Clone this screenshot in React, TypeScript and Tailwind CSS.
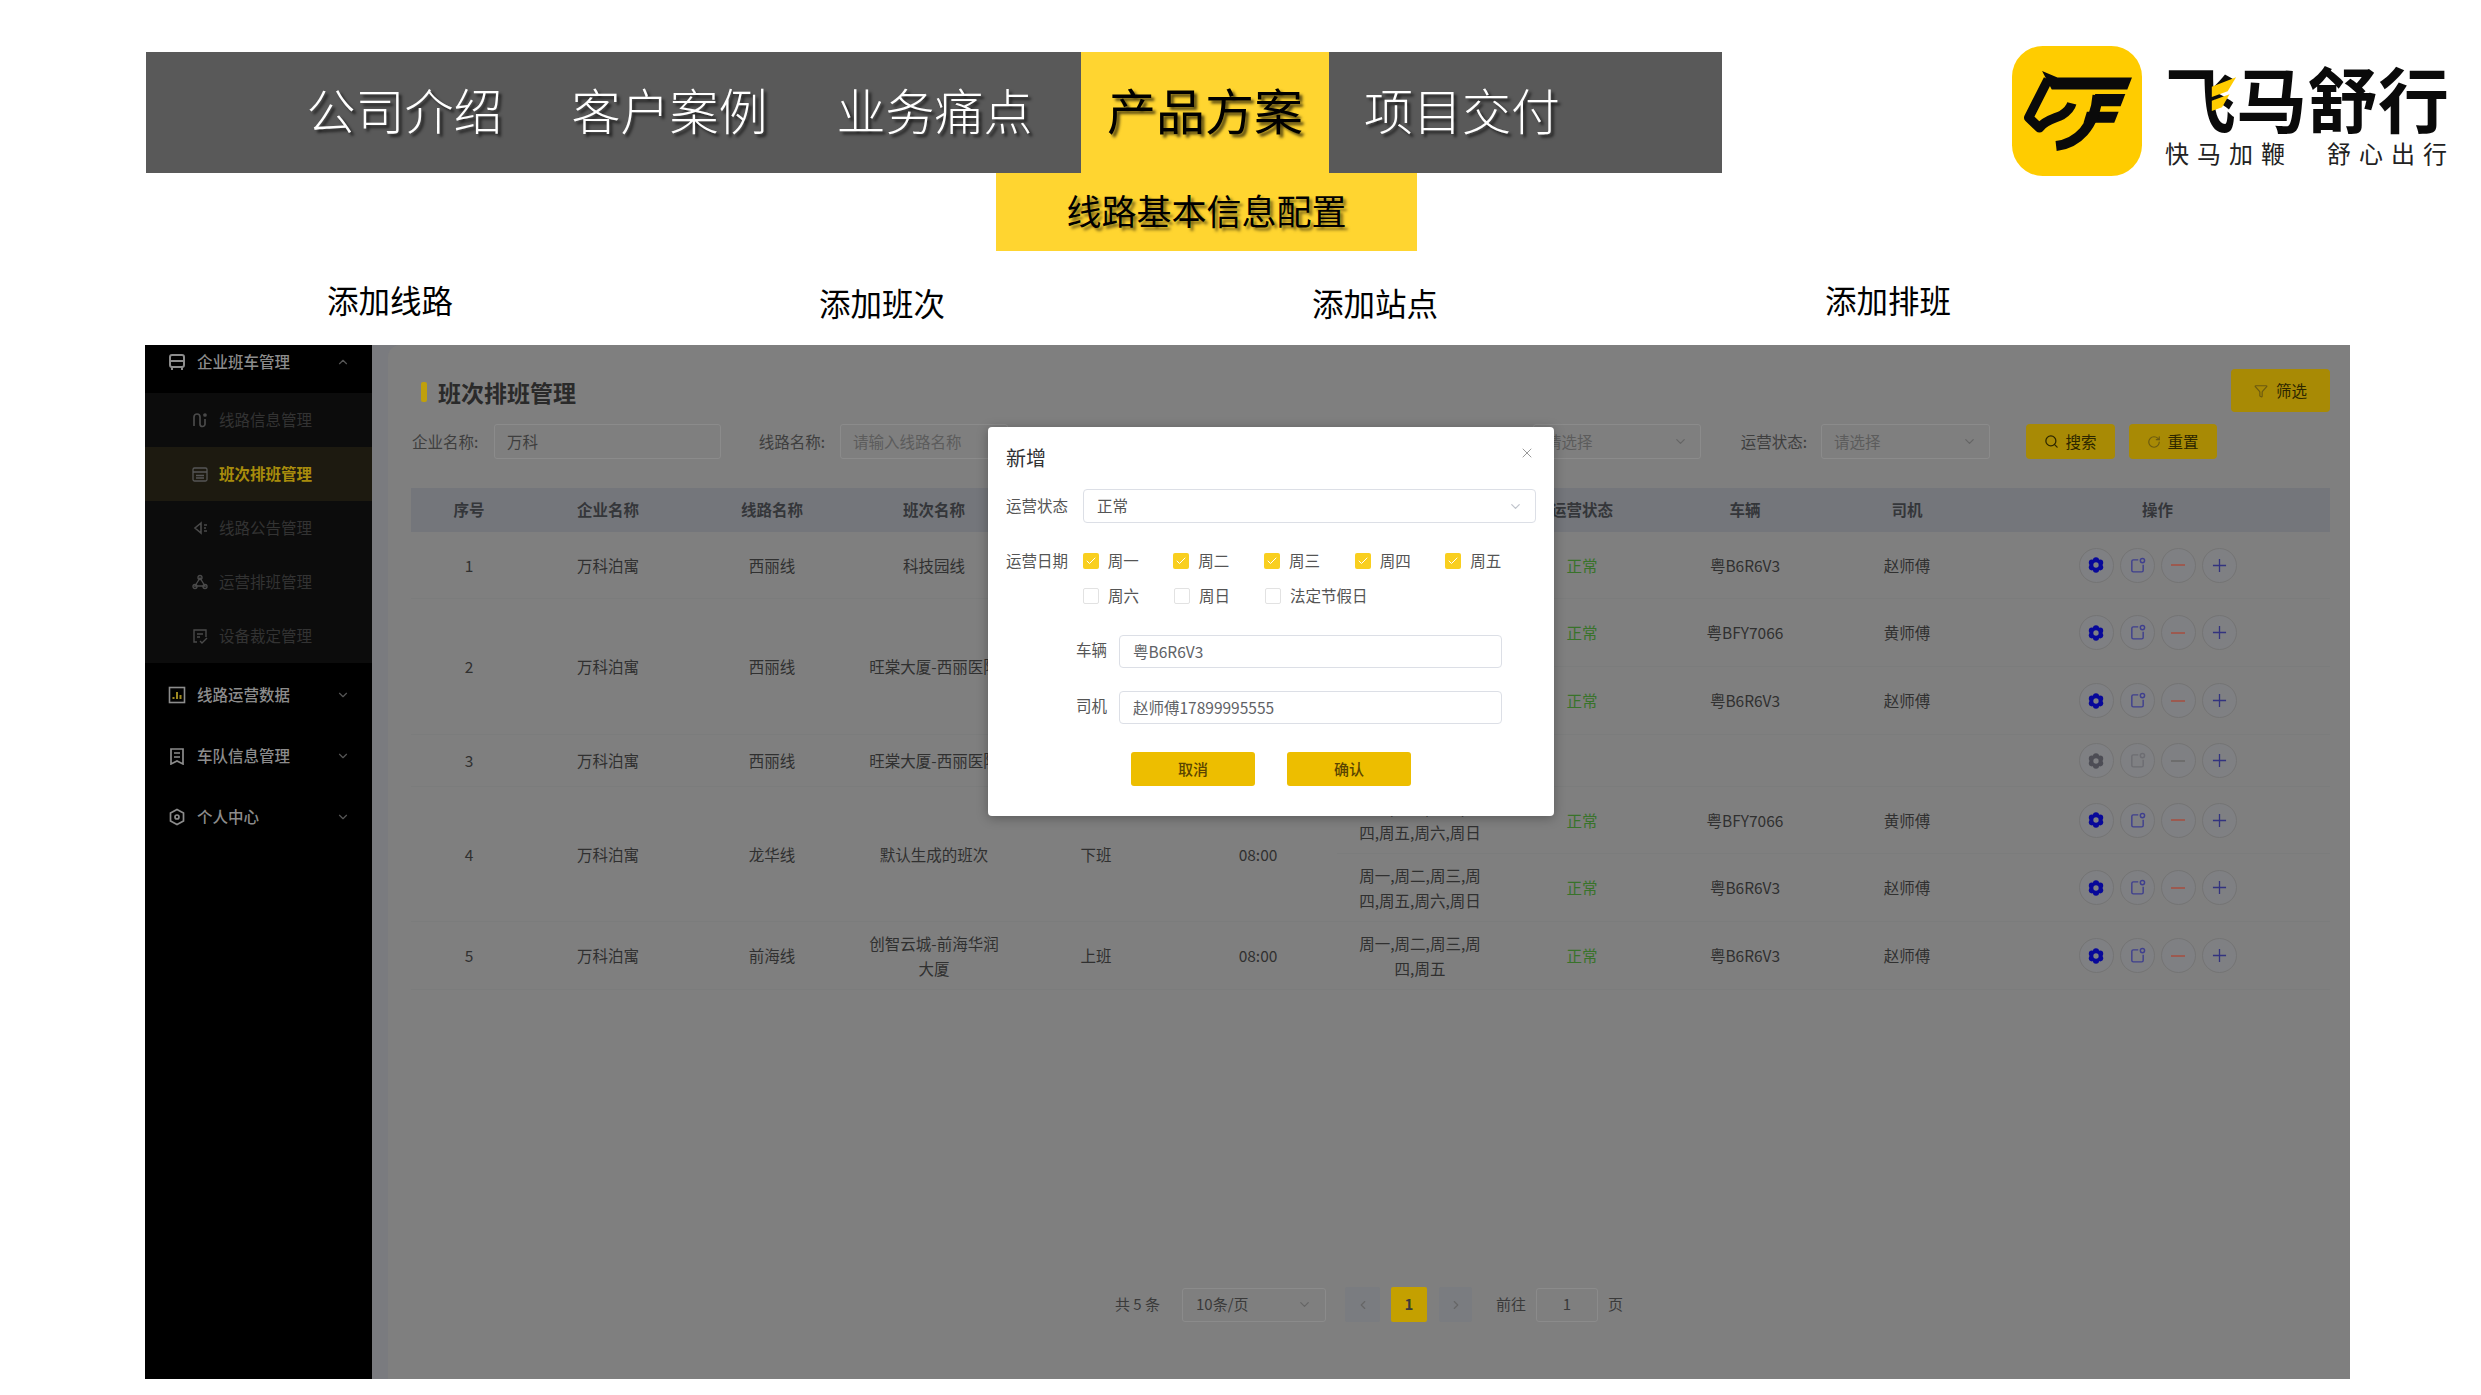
import React from "react";
import { ChevronDown, ChevronLeft, ChevronRight, ChevronUp, Filter, RotateCw, Search, X, Check } from "lucide-react";

type Sub = {
  days: string[];
  status: string;
  car: string;
  driver: string;
  active?: boolean;
};

type Group = {
  seq: number;
  line: string;
  shift: string[];
  type: string;
  time: string;
  subs: Sub[];
};

const allDays = ["周一,周二,周三,周", "四,周五,周六,周日"];
const workDays = ["周一,周二,周三,周", "四,周五"];

const groups: Group[] = [
  {
    seq: 1,
    line: "西丽线",
    shift: ["科技园线"],
    type: "上班",
    time: "08:00",
    subs: [{ days: workDays, status: "正常", car: "粤B6R6V3", driver: "赵师傅", active: true }],
  },
  {
    seq: 2,
    line: "西丽线",
    shift: ["旺棠大厦-西丽医院"],
    type: "上班",
    time: "08:00",
    subs: [
      { days: workDays, status: "正常", car: "粤BFY7066", driver: "黄师傅", active: true },
      { days: workDays, status: "正常", car: "粤B6R6V3", driver: "赵师傅", active: true },
    ],
  },
  {
    seq: 3,
    line: "西丽线",
    shift: ["旺棠大厦-西丽医院"],
    type: "下班",
    time: "18:00",
    subs: [{ days: [], status: "", car: "", driver: "" }],
  },
  {
    seq: 4,
    line: "龙华线",
    shift: ["默认生成的班次"],
    type: "下班",
    time: "08:00",
    subs: [
      { days: allDays, status: "正常", car: "粤BFY7066", driver: "黄师傅", active: true },
      { days: allDays, status: "正常", car: "粤B6R6V3", driver: "赵师傅", active: true },
    ],
  },
  {
    seq: 5,
    line: "前海线",
    shift: ["创智云城-前海华润", "大厦"],
    type: "上班",
    time: "08:00",
    subs: [{ days: workDays, status: "正常", car: "粤B6R6V3", driver: "赵师傅", active: true }],
  },
];

const headers = ["序号", "企业名称", "线路名称", "班次名称", "班次类型", "发车时间", "运营日期", "运营状态", "车辆", "司机", "操作"];

const Logo = () => (
  <svg viewBox="96 78 389 389" className="w-[130px] h-[130px] shrink-0">
    <rect x="96" y="78" width="389" height="389" rx="92" fill="#FFCC00" />
    <path d="M204 178 L146 292 L178 323 C195 300 225 295 245 285 C265 272 272 262 275 250" fill="none" stroke="#0a0a0a" strokeWidth="28" strokeLinejoin="round" />
    <polygon points="186,153 232,172 455,172 441,208 215,208" fill="#0a0a0a" />
    <polygon points="345,222 435,222 421,258 338,258" fill="#0a0a0a" />
    <polygon points="320,275 415,275 402,308 310,308" fill="#0a0a0a" />
    <path d="M352 225 C345 320 290 370 228 377" fill="none" stroke="#0a0a0a" strokeWidth="30" />
  </svg>
);

const GearIcon = ({ color }: { color: string }) => (
  <svg viewBox="0 0 24 24" className="w-[16px] h-[16px]">
    <g fill={color}>
      <circle cx="12" cy="5" r="4.6" />
      <circle cx="18.2" cy="8.5" r="4.6" />
      <circle cx="18.2" cy="15.5" r="4.6" />
      <circle cx="12" cy="19" r="4.6" />
      <circle cx="5.8" cy="15.5" r="4.6" />
      <circle cx="5.8" cy="8.5" r="4.6" />
    </g>
    <circle cx="12" cy="12" r="4" fill="#7f8083" />
  </svg>
);

const NoteIcon = ({ color }: { color: string }) => (
  <svg viewBox="0 0 24 24" className="w-[17px] h-[17px]" fill="none" stroke={color} strokeWidth="2">
    <path d="M13 4H6a2 2 0 0 0-2 2v13a2 2 0 0 0 2 2h12a2 2 0 0 0 2-2v-8" />
    <circle cx="19" cy="5" r="3" />
  </svg>
);

const Actions = ({ active }: { active?: boolean }) => (
  <div className="flex items-center justify-center gap-[6px]">
    <span className="w-[35px] h-[35px] rounded-full border border-[#747474] bg-[#7f8083] flex items-center justify-center">
      <GearIcon color={active ? "#08089a" : "#4d4d55"} />
    </span>
    <span className="w-[35px] h-[35px] rounded-full border border-[#747474] bg-[#7f8083] flex items-center justify-center">
      <NoteIcon color={active ? "#3f3f8e" : "#6d6d72"} />
    </span>
    <span className="w-[35px] h-[35px] rounded-full border border-[#747474] bg-[#7f8083] flex items-center justify-center">
      <span className={active ? "w-[14px] h-[2px] bg-[#9c5a50]" : "w-[14px] h-[2px] bg-[#6d6d6d]"} />
    </span>
    <span className="w-[35px] h-[35px] rounded-full border border-[#747474] bg-[#7f8083] flex items-center justify-center text-[#33337f]">
      <svg viewBox="0 0 16 16" className="w-[15px] h-[15px]" stroke="currentColor" strokeWidth="1.4">
        <path d="M8 1v14M1 8h14" />
      </svg>
    </span>
  </div>
);

const cellBase = "flex flex-col items-center justify-center border-b border-[#7b7c7c] text-center leading-[25px]";
const tableCols = "grid-cols-[116px_162px_166px_158px_166px_158px_166px_158px_168px_156px_1fr]";

const Table = () => (
  <div className="text-[15.5px] text-[#303030]">
    <div className={`grid ${tableCols} h-[44px] bg-[#74767b] items-center text-center font-bold text-[#34363a]`}>
      {headers.map((h) => (
        <span key={h}>{h}</span>
      ))}
    </div>
    <div className={`grid ${tableCols} grid-rows-[67px_68px_68px_52px_67px_68px_68px]`}>
      {groups.map((g) => {
        const span = g.subs.length === 2 ? "row-span-2" : "row-span-1";
        return (
          <React.Fragment key={g.seq}>
            <div className={`${cellBase} ${span}`}>{g.seq}</div>
            <div className={`${cellBase} ${span}`}>万科泊寓</div>
            <div className={`${cellBase} ${span}`}>{g.line}</div>
            <div className={`${cellBase} ${span}`}>
              {g.shift.map((s) => (
                <span key={s}>{s}</span>
              ))}
            </div>
            <div className={`${cellBase} ${span}`}>{g.type}</div>
            <div className={`${cellBase} ${span}`}>{g.time}</div>
            {g.subs.map((s, i) => (
              <React.Fragment key={i}>
                <div className={cellBase}>
                  {s.days.map((d) => (
                    <span key={d}>{d}</span>
                  ))}
                </div>
                <div className={`${cellBase} text-[#38732a]`}>{s.status}</div>
                <div className={cellBase}>{s.car}</div>
                <div className={cellBase}>{s.driver}</div>
                <div className={cellBase}>
                  <Actions active={s.active} />
                </div>
              </React.Fragment>
            ))}
          </React.Fragment>
        );
      })}
    </div>
  </div>
);

const SideTop = ({ icon, label, up, className }: { icon: React.ReactNode; label: string; up?: boolean; className: string }) => (
  <div className={`flex items-center pl-[23px] pr-[22px] text-[15.5px] font-medium text-[#8c8c8c] ${className}`}>
    <span className="w-[18px] h-[18px] mr-[11px] flex items-center justify-center">{icon}</span>
    <span className="flex-1">{label}</span>
    {up ? <ChevronUp size={14} className="text-[#555]" /> : <ChevronDown size={14} className="text-[#555]" />}
  </div>
);

const SideSub = ({ icon, label, active }: { icon: React.ReactNode; label: string; active?: boolean }) => (
  <div
    className={
      active
        ? "h-[54px] flex items-center pl-[47px] text-[15.5px] font-bold bg-[#1d1a10] text-[#a88c0c]"
        : "h-[54px] flex items-center pl-[47px] text-[15.5px] text-[#333]"
    }
  >
    <span className="w-[16px] h-[16px] mr-[11px] flex items-center justify-center">{icon}</span>
    {label}
  </div>
);

const Sidebar = () => (
  <aside className="w-[227px] shrink-0 bg-black h-full">
    <SideTop
      className="h-[48px] pb-[14px]"
      up
      label="企业班车管理"
      icon={
        <svg viewBox="0 0 18 18" className="w-[18px] h-[18px]" fill="none" stroke="#8c8c8c" strokeWidth="2">
          <rect x="2" y="2" width="14" height="12" rx="2" />
          <path d="M2 8h14M4 14v3M14 14v3" />
        </svg>
      }
    />
    <div className="bg-[#0c0c0c]">
      <SideSub
        label="线路信息管理"
        icon={
          <svg viewBox="0 0 16 16" className="w-[16px] h-[16px]" fill="none" stroke="#4a4a4a" strokeWidth="1.7">
            <path d="M2 14V5a3 3 0 0 1 6 0v7a2.5 2.5 0 0 0 5 0V7" />
            <circle cx="13" cy="3" r="1" fill="#4a4a4a" />
          </svg>
        }
      />
      <SideSub
        active
        label="班次排班管理"
        icon={
          <svg viewBox="0 0 16 16" className="w-[16px] h-[16px]" fill="none" stroke="#555" strokeWidth="1.3">
            <rect x="1" y="2" width="14" height="13" rx="1.5" />
            <path d="M1 6h14M4 9.5h8M4 12h8" />
          </svg>
        }
      />
      <SideSub
        label="线路公告管理"
        icon={
          <svg viewBox="0 0 16 16" className="w-[16px] h-[16px]" fill="none" stroke="#4a4a4a" strokeWidth="1.6">
            <path d="M9 3 3 8l6 5zM12 5h3M12 8h2M12 11h3" />
          </svg>
        }
      />
      <SideSub
        label="运营排班管理"
        icon={
          <svg viewBox="0 0 16 16" className="w-[16px] h-[16px]" fill="none" stroke="#4a4a4a" strokeWidth="1.4">
            <path d="M8 4 3 12h10z" />
            <circle cx="8" cy="3.5" r="2" />
            <circle cx="3" cy="12.5" r="2" />
            <circle cx="13" cy="12.5" r="2" />
          </svg>
        }
      />
      <SideSub
        label="设备裁定管理"
        icon={
          <svg viewBox="0 0 16 16" className="w-[16px] h-[16px]" fill="none" stroke="#4a4a4a" strokeWidth="1.4">
            <path d="M5 14H2V2h12v7M5 6h6M5 9h3M8 13l2 2 5-5" />
          </svg>
        }
      />
    </div>
    <SideTop
      className="h-[61px] mt-px"
      label="线路运营数据"
      icon={
        <svg viewBox="0 0 18 18" className="w-[18px] h-[18px]" fill="none" stroke="#8c8c8c" strokeWidth="1.6">
          <rect x="1.5" y="1.5" width="15" height="15" />
          <path d="M5.5 13v-2M9 13V6M12.5 13V9" strokeWidth="2" stroke="#a08a20" />
        </svg>
      }
    />
    <SideTop
      className="h-[61px]"
      label="车队信息管理"
      icon={
        <svg viewBox="0 0 18 18" className="w-[18px] h-[18px]" fill="none" stroke="#8c8c8c" strokeWidth="1.7">
          <path d="M3 2h12v15l-6-3-6 3zM6 6h6M6 10h6" />
        </svg>
      }
    />
    <SideTop
      className="h-[61px]"
      label="个人中心"
      icon={
        <svg viewBox="0 0 18 18" className="w-[18px] h-[18px]" fill="none" stroke="#8c8c8c" strokeWidth="1.7">
          <path d="M9 1.5 15.5 5v8L9 16.5 2.5 13V5z" />
          <circle cx="9" cy="9" r="2" />
        </svg>
      }
    />
  </aside>
);

const FieldBox = ({ text, width, chevron, dim }: { text: string; width: string; chevron?: boolean; dim?: boolean }) => (
  <div className={`h-[35px] ${width} rounded-[3px] border border-[#8b8b8b] flex items-center justify-between px-[12px] ${dim ? "text-[#5c5c5c]" : "text-[#3e3e3e]"}`}>
    <span>{text}</span>
    {chevron && <ChevronDown size={15} className="text-[#666]" />}
  </div>
);

const FilterRow = () => (
  <div className="flex items-center h-[35px] text-[15.5px] text-[#3e3e3e]">
    <span className="w-[83px] pl-px">企业名称:</span>
    <FieldBox text="万科" width="w-[227px]" />
    <span className="w-[119px] text-right pr-[15px]">线路名称:</span>
    <FieldBox text="请输入线路名称" width="w-[168px]" dim />
    <span className="w-[525px] text-right pr-[13px]">运营状况:</span>
    <FieldBox text="请选择" width="w-[168px]" chevron dim />
    <span className="w-[120px] text-right pr-[14px]">运营状态:</span>
    <FieldBox text="请选择" width="w-[169px]" chevron dim />
    <button className="ml-[36px] w-[89px] h-[35px] rounded-[4px] bg-[#a88a05] text-[#2c2600] flex items-center justify-center gap-[6px]">
      <Search size={15} />
      搜索
    </button>
    <button className="ml-[14px] w-[88px] h-[35px] rounded-[4px] bg-[#a88a05] text-[#2c2600] flex items-center justify-center gap-[6px]">
      <RotateCw size={14} className="text-[#6b5a10]" />
      重置
    </button>
  </div>
);

const Pagination = () => (
  <div className="flex items-center h-[35px] mt-[297px] ml-[704px] text-[15px] text-[#3a3a3a]">
    <span className="w-[48px] whitespace-nowrap">共 5 条</span>
    <div className="ml-[19px] w-[144px] h-[34px] rounded-[3px] border border-[#8b8b8b] flex items-center justify-between px-[13px]">
      10条/页
      <ChevronDown size={15} className="text-[#666]" />
    </div>
    <span className="ml-[19px] w-[35px] h-[35px] bg-[#7a7c80] rounded-[2px] flex items-center justify-center text-[#666]">
      <ChevronLeft size={14} />
    </span>
    <span className="ml-[11px] w-[36px] h-[35px] bg-[#c4a000] rounded-[2px] flex items-center justify-center font-bold">1</span>
    <span className="ml-[12px] w-[33px] h-[35px] bg-[#7a7c80] rounded-[2px] flex items-center justify-center text-[#666]">
      <ChevronRight size={14} />
    </span>
    <span className="ml-[24px]">前往</span>
    <span className="ml-[10px] w-[62px] h-[34px] rounded-[3px] border border-[#8b8b8b] flex items-center justify-center">1</span>
    <span className="ml-[10px]">页</span>
  </div>
);

const DayCheck = ({ label, checked, className }: { label: string; checked?: boolean; className: string }) => (
  <div className={`flex items-center ${className}`}>
    {checked ? (
      <span className="w-[16px] h-[16px] rounded-[2px] bg-[#f9cf1f] flex items-center justify-center text-white">
        <Check size={12} strokeWidth={2} />
      </span>
    ) : (
      <span className="w-[16px] h-[16px] rounded-[2px] border border-[#e2e2e2] bg-white" />
    )}
    <span className="ml-[9px]">{label}</span>
  </div>
);

const Modal = () => (
  <div className="absolute left-[843px] top-[82px] w-[566px] h-[389px] bg-white rounded-[4px] text-[15.5px] text-[#555] px-[18px] shadow-[0_2px_12px_rgba(0,0,0,0.3)]">
    <div className="flex items-center justify-between h-[62px] pr-0">
      <span className="text-[20px] text-[#303133]">新增</span>
      <X size={16} strokeWidth={1.5} className="text-[#9a9a9a] mb-[10px] mr-[1px]" />
    </div>
    <div className="flex items-center h-[34px]">
      <span className="w-[77px]">运营状态</span>
      <div className="flex-1 h-[34px] rounded-[4px] border border-[#dcdfe6] flex items-center justify-between pl-[13px] pr-[12px]">
        正常
        <ChevronDown size={15} className="text-[#c0c4cc]" />
      </div>
    </div>
    <div className="flex mt-[28px] h-[20px] items-center">
      <span className="w-[77px]">运营日期</span>
      <DayCheck className="w-[91px]" label="周一" checked />
      <DayCheck className="w-[91px]" label="周二" checked />
      <DayCheck className="w-[91px]" label="周三" checked />
      <DayCheck className="w-[91px]" label="周四" checked />
      <DayCheck className="w-[91px]" label="周五" checked />
    </div>
    <div className="flex mt-[15px] h-[20px] items-center pl-[77px]">
      <DayCheck className="w-[91px]" label="周六" />
      <DayCheck className="w-[91px]" label="周日" />
      <DayCheck className="w-[120px]" label="法定节假日" />
    </div>
    <div className="flex items-center h-[33px] mt-[29px]">
      <span className="w-[100px] pb-[4px] pl-[70px] whitespace-nowrap">车辆</span>
      <div className="ml-[13px] w-[383px] h-[33px] rounded-[4px] border border-[#dcdfe6] flex items-center pl-[13px] text-[#606266]">粤B6R6V3</div>
    </div>
    <div className="flex items-center h-[33px] mt-[23px]">
      <span className="w-[100px] pb-[4px] pl-[70px] whitespace-nowrap">司机</span>
      <div className="ml-[13px] w-[383px] h-[33px] rounded-[4px] border border-[#dcdfe6] flex items-center pl-[13px] text-[#606266]">赵师傅17899995555</div>
    </div>
    <div className="flex mt-[28px] ml-[125px] gap-[32px]">
      <button className="w-[124px] h-[34px] rounded-[3px] bg-[#edbe00] text-[#5b4500] text-[15px] font-medium">取消</button>
      <button className="w-[124px] h-[34px] rounded-[3px] bg-[#edbe00] text-[#5b4500] text-[15px] font-medium">确认</button>
    </div>
  </div>
);

const navShadow = "[text-shadow:3px_3px_3px_rgba(0,0,0,0.65)]";

export default function App() {
  return (
    <div className="w-[2481px] h-[1395px] bg-white overflow-hidden font-['Noto_Sans_CJK_SC','Liberation_Sans',sans-serif]">
      <div className="flex items-start h-[173px] pt-[52px] pl-[146px]">
        <nav className="flex w-[1576px] h-[121px] bg-[#595959] pl-[126px] text-[49px] font-light text-white">
          <span className={`w-[265px] pb-[7px] flex items-center justify-center ${navShadow}`}>公司介绍</span>
          <span className={`w-[265px] pb-[7px] flex items-center justify-center ${navShadow}`}>客户案例</span>
          <span className={`w-[265px] pb-[7px] flex items-center justify-center ${navShadow}`}>业务痛点</span>
          <span className={`ml-[14px] w-[248px] pb-[7px] bg-[#ffd530] text-black font-normal flex items-center justify-center ${navShadow}`}>产品方案</span>
          <span className={`w-[266px] pb-[7px] flex items-center justify-center ${navShadow}`}>项目交付</span>
        </nav>
        <div className="flex items-center -mt-[6px] ml-[290px]">
          <Logo />
          <div className="ml-[23px] flex flex-col">
            <div className="relative text-[71px] leading-[82px] font-bold text-[#0a0a0a] whitespace-nowrap">
              飞马舒行
              <svg viewBox="0 0 30 40" className="absolute left-[44px] top-[22px] w-[28px] h-[38px]">
                <polygon points="3,10 29,0 20,15 3,21" fill="#FFCC00" />
                <polygon points="3,25 22,18 14,32 3,36" fill="#FFCC00" />
              </svg>
            </div>
            <div className="text-[24px] leading-[30px] tracking-[8px] text-[#222] whitespace-nowrap mt-[1px]">
              快马加鞭<span className="ml-[34px]">舒心出行</span>
            </div>
          </div>
        </div>
      </div>
      <div className="ml-[996px] -mt-px pb-[2px] w-[421px] h-[79px] bg-[#ffd530] flex items-center justify-center text-[35px] text-black [text-shadow:3px_3px_3px_rgba(0,0,0,0.5)]">
        线路基本信息配置
      </div>
      <div className="flex h-[94px] text-[31.5px] text-black pl-[327px]">
        <span className="mt-[28px] w-[492px] h-fit leading-[40px]">添加线路</span>
        <span className="mt-[31px] w-[493px] h-fit leading-[40px]">添加班次</span>
        <span className="mt-[31px] w-[513px] h-fit leading-[40px]">添加站点</span>
        <span className="mt-[28px] h-fit leading-[40px]">添加排班</span>
      </div>
      <section className="relative ml-[145px] w-[2205px] h-[1034px] flex">
        <Sidebar />
        <main className="flex-1 bg-[#7a7b7f] pl-[16px] min-w-0">
          <div className="h-full bg-[#7f7f7f] rounded-tl-xl pl-[23px] pr-[20px] pt-[24px]">
            <div className="flex items-center justify-between h-[43px]">
              <div className="flex items-center gap-[11px] ml-[10px] pt-[3px]">
                <span className="w-[6px] h-[20px] rounded-[2px] bg-[#c0a00c]" />
                <h1 className="text-[23px] font-bold text-[#2a2a2a]">班次排班管理</h1>
              </div>
              <button className="w-[99px] h-[43px] rounded-[4px] bg-[#a88a05] text-[#2c2600] text-[15.5px] flex items-center justify-center gap-[8px]">
                <Filter size={14} className="text-[#6b5a10]" />
                筛选
              </button>
            </div>
            <div className="mt-[12px]">
              <FilterRow />
            </div>
            <div className="mt-[29px]">
              <Table />
            </div>
            <Pagination />
          </div>
        </main>
        <Modal />
      </section>
    </div>
  );
}
